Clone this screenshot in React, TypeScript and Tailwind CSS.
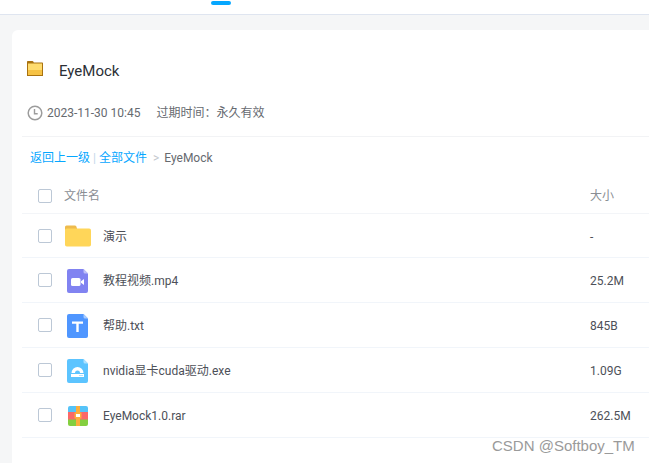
type Row = { name: string; size: string; icon: React.ReactNode; height: string };

const FolderIcon = () => (
  <svg width="26" height="22" viewBox="0 0 26 22">
    <path d="M0 2A1.500 1.500 0 0 1 1.500.5h8.500A1.500 1.500 0 0 1 11.500 2l1 3H0z" fill="#eebb4d" />
    <rect x="0" y="3.500" width="26" height="18" rx="1.800" fill="#ffd659" />
  </svg>
);

const DocShape = ({ color, fold, children }: { color: string; fold: string; children: React.ReactNode }) => (
  <svg className="-ml-px translate-y-[1px]" width="21" height="24" viewBox="0 0 21 24">
    <path d="M2 0h14.500L21 4.500V22a2 2 0 0 1-2 2H2a2 2 0 0 1-2-2V2a2 2 0 0 1 2-2z" fill={color} />
    <path d="M16.500 0L21 4.500h-3a1.500 1.500 0 0 1-1.500-1.500z" fill={fold} />
    {children}
  </svg>
);

const VideoIcon = () => (
  <DocShape color="#8183f1" fold="#c0c1f8">
    <rect x="4" y="9" width="9.500" height="8" rx="1.600" fill="#fff" />
    <path d="M14 12.200l3-2.200v6l-3-2.200z" fill="#fff" />
  </DocShape>
);

const TextIcon = () => (
  <DocShape color="#4f96ff" fold="#a7cbff">
    <path d="M5 7.500h11v2.200h-4.300V18H9.300V9.700H5z" fill="#fff" />
  </DocShape>
);

const ExeIcon = () => (
  <DocShape color="#5cc4ff" fold="#aee2ff">
    <path d="M4.500 14a6 6 0 0 1 12 0h-3.500a2.500 2.500 0 0 0-5 0z" fill="#fff" />
    <rect x="4" y="15" width="13" height="3" fill="#fff" />
    <rect x="12.500" y="16" width="1" height="1" fill="#5cc4ff" />
    <rect x="14.500" y="16" width="1" height="1" fill="#5cc4ff" />
  </DocShape>
);

const RarIcon = () => (
  <svg className="translate-y-[1px]" width="20" height="20" viewBox="0 0 20 20">
    <path d="M2 0h16a2 2 0 0 1 2 2v5H0V2a2 2 0 0 1 2-2z" fill="#55c3f8" />
    <rect x="0" y="6" width="20" height="8" fill="#fb6868" />
    <path d="M0 13.500h20V18a2 2 0 0 1-2 2H2a2 2 0 0 1-2-2z" fill="#84cf3f" />
    <rect x="8" y="0" width="4" height="20" fill="#fcae3c" />
    <rect x="6.500" y="6.500" width="7" height="6" fill="#fcae3c" />
    <rect x="8" y="8" width="4" height="3" fill="#fff" />
  </svg>
);

const rows: Row[] = [
  { name: '演示', size: '-', icon: <FolderIcon />, height: 'h-[44px]' },
  { name: '教程视频.mp4', size: '25.2M', icon: <VideoIcon />, height: 'h-[45px]' },
  { name: '帮助.txt', size: '845B', icon: <TextIcon />, height: 'h-[45px]' },
  { name: 'nvidia显卡cuda驱动.exe', size: '1.09G', icon: <ExeIcon />, height: 'h-[45px]' },
  { name: 'EyeMock1.0.rar', size: '262.5M', icon: <RarIcon />, height: 'h-[45px]' },
];

const Check = () => <span className="box-border h-[14px] w-[14px] shrink-0 rounded-[2px] border border-[#bcc8d6] bg-white" />;

export default function App() {
  return (
    <div className="relative h-[463px] w-[649px] overflow-hidden bg-[#f5f6f7] font-['Roboto','Noto_Sans_CJK_SC',sans-serif] text-xs">
      <div className="h-[15px] border-b border-[#dfe5f0] bg-white pl-[211px] pt-[1px]">
        <div className="h-[4px] w-5 rounded-[2px] bg-[#06a7ff]" />
      </div>

      <div className="ml-3 mt-[15px] h-[433px] rounded-tl-md bg-white">
        <div className="flex items-center pl-[15px] pt-[29px]">
          <svg className="-mt-[4px]" width="16" height="15" viewBox="0 0 16 15">
            <path d="M0 1C0 .4.400 0 1 0h4.300c.6 0 1 .3 1.300 1l.2.500H15c.6 0 1 .4 1 1V15H0z" fill="#a9720f" />
            <rect x="1" y="2.500" width="14" height="11.500" fill="#ffdc6e" />
            <rect x="1" y="9" width="14" height="5" fill="#f6c244" />
          </svg>
          <span className="ml-4 mt-[2px] text-[15px] leading-5 text-[#2b2f36]">EyeMock</span>
        </div>

        <div className="mt-[24px] flex items-center pl-[15px] text-[#666a70]">
          <svg width="16" height="16" viewBox="0 0 16 16" fill="none" stroke="#9c9c9c">
            <circle cx="8" cy="8" r="6.800" strokeWidth="1.500" />
            <path d="M7.500 4v4.800h3.200" strokeWidth="1.400" />
          </svg>
          <span className="ml-1">2023-11-30 10:45</span>
          <span className="ml-4">过期时间：永久有效</span>
        </div>

        <div className="ml-[10px] mt-[15px] flex h-[40px] items-center border-t border-[#f2f3f5] pl-2 pt-[3px] text-[#06a7ff]">
          <span>返回上一级</span>
          <span className="mx-[3px] text-[#c5d8ea]">|</span>
          <span>全部文件</span>
          <span className="ml-[6px] mr-[5px] text-[#c4c8ce]">&gt;</span>
          <span className="text-[#666a70]">EyeMock</span>
        </div>

        <div className="ml-[10px]">
          <div className="flex h-[38px] items-center border-b border-[#f3f5f8] pl-4 pt-[2px] text-[#8a8e94]">
            <Check />
            <span className="ml-[12px] flex-1">文件名</span>
            <span className="w-[59px]">大小</span>
          </div>
          {rows.map((row) => (
            <div key={row.name} className={`flex items-center border-b border-[#f1f5fa] pl-4 text-[#4d5058] ${row.height}`}>
              <Check />
              <span className="ml-[13px] flex w-[26px] shrink-0 justify-center">{row.icon}</span>
              <span className="ml-3 flex-1 translate-y-[1px]">{row.name}</span>
              <span className="w-[59px] translate-y-[1px]">{row.size}</span>
            </div>
          ))}
        </div>
      </div>

      <span className="absolute left-[492px] top-[438px] font-['Liberation_Sans',sans-serif] text-[15px] leading-4 text-[#9a9a9a]">
        CSDN @Softboy_TM
      </span>
    </div>
  );
}
